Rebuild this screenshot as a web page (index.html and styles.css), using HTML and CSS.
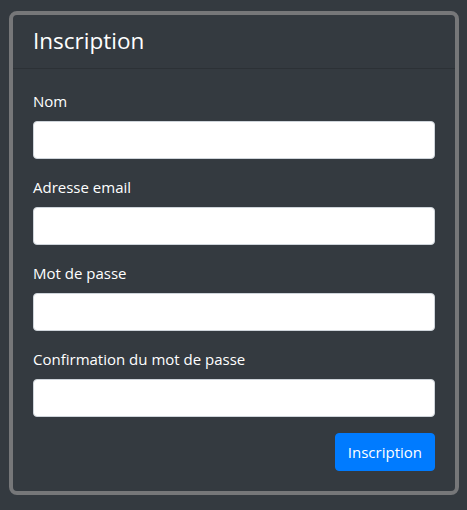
FILE: index.html
```html
<!DOCTYPE html>
<html lang="fr">
<head>
<meta charset="utf-8">
<title>Inscription</title>
<link rel="stylesheet" href="styles.css">
</head>
<body>
<div class="card">
  <div class="card-header">
    <h4 class="title">Inscription</h4>
  </div>
  <div class="card-body">
    <form class="form">
      <div class="form-group">
        <label class="label" for="nom">Nom</label>
        <input class="input" id="nom" type="text">
      </div>
      <div class="form-group">
        <label class="label" for="email">Adresse email</label>
        <input class="input" id="email" type="email">
      </div>
      <div class="form-group">
        <label class="label" for="pw">Mot de passe</label>
        <input class="input" id="pw" type="password">
      </div>
      <div class="form-group">
        <label class="label" for="pw2">Confirmation du mot de passe</label>
        <input class="input" id="pw2" type="password">
      </div>
      <div class="actions">
        <button class="btn" type="submit">Inscription</button>
      </div>
    </form>
  </div>
</div>
</body>
</html>
```
FILE: styles.css
```css
* { box-sizing: border-box; }
html, body { height: 100%; }
body {
  margin: 0;
  padding: 11px 8px 0 9px;
  background: #343a40;
  color: #fff;
  font-family: "Open Sans", "Noto Sans", sans-serif;
  font-size: 15px;
  line-height: 24px;
}
.card {
  border: 4px solid #767779;
  border-radius: 8px;
  background: #343a40;
}
.card-header {
  padding: 12px 20px;
  border-bottom: 1px solid rgba(0,0,0,0.15);
}
.title {
  margin: 0;
  font-size: 22.5px;
  font-weight: 400;
  line-height: 28.8px;
}
.card-body {
  padding: 20px;
}
.form { margin: 0; }
.form-group { margin-bottom: 16px; }
.label {
  display: block;
  margin-bottom: 8px;
}
.input {
  display: block;
  width: 100%;
  height: 38px;
  padding: 6px 12px;
  border: 1px solid #ced4da;
  border-radius: 4px;
  background: #fff;
  font: inherit;
}
.actions {
  display: flex;
  justify-content: flex-end;
}
.btn {
  background: #007bff;
  color: #fff;
  border: 1px solid #007bff;
  border-radius: 4px;
  padding: 6px 12px;
  font: inherit;
  line-height: 24px;
  height: 38px;
}
```
